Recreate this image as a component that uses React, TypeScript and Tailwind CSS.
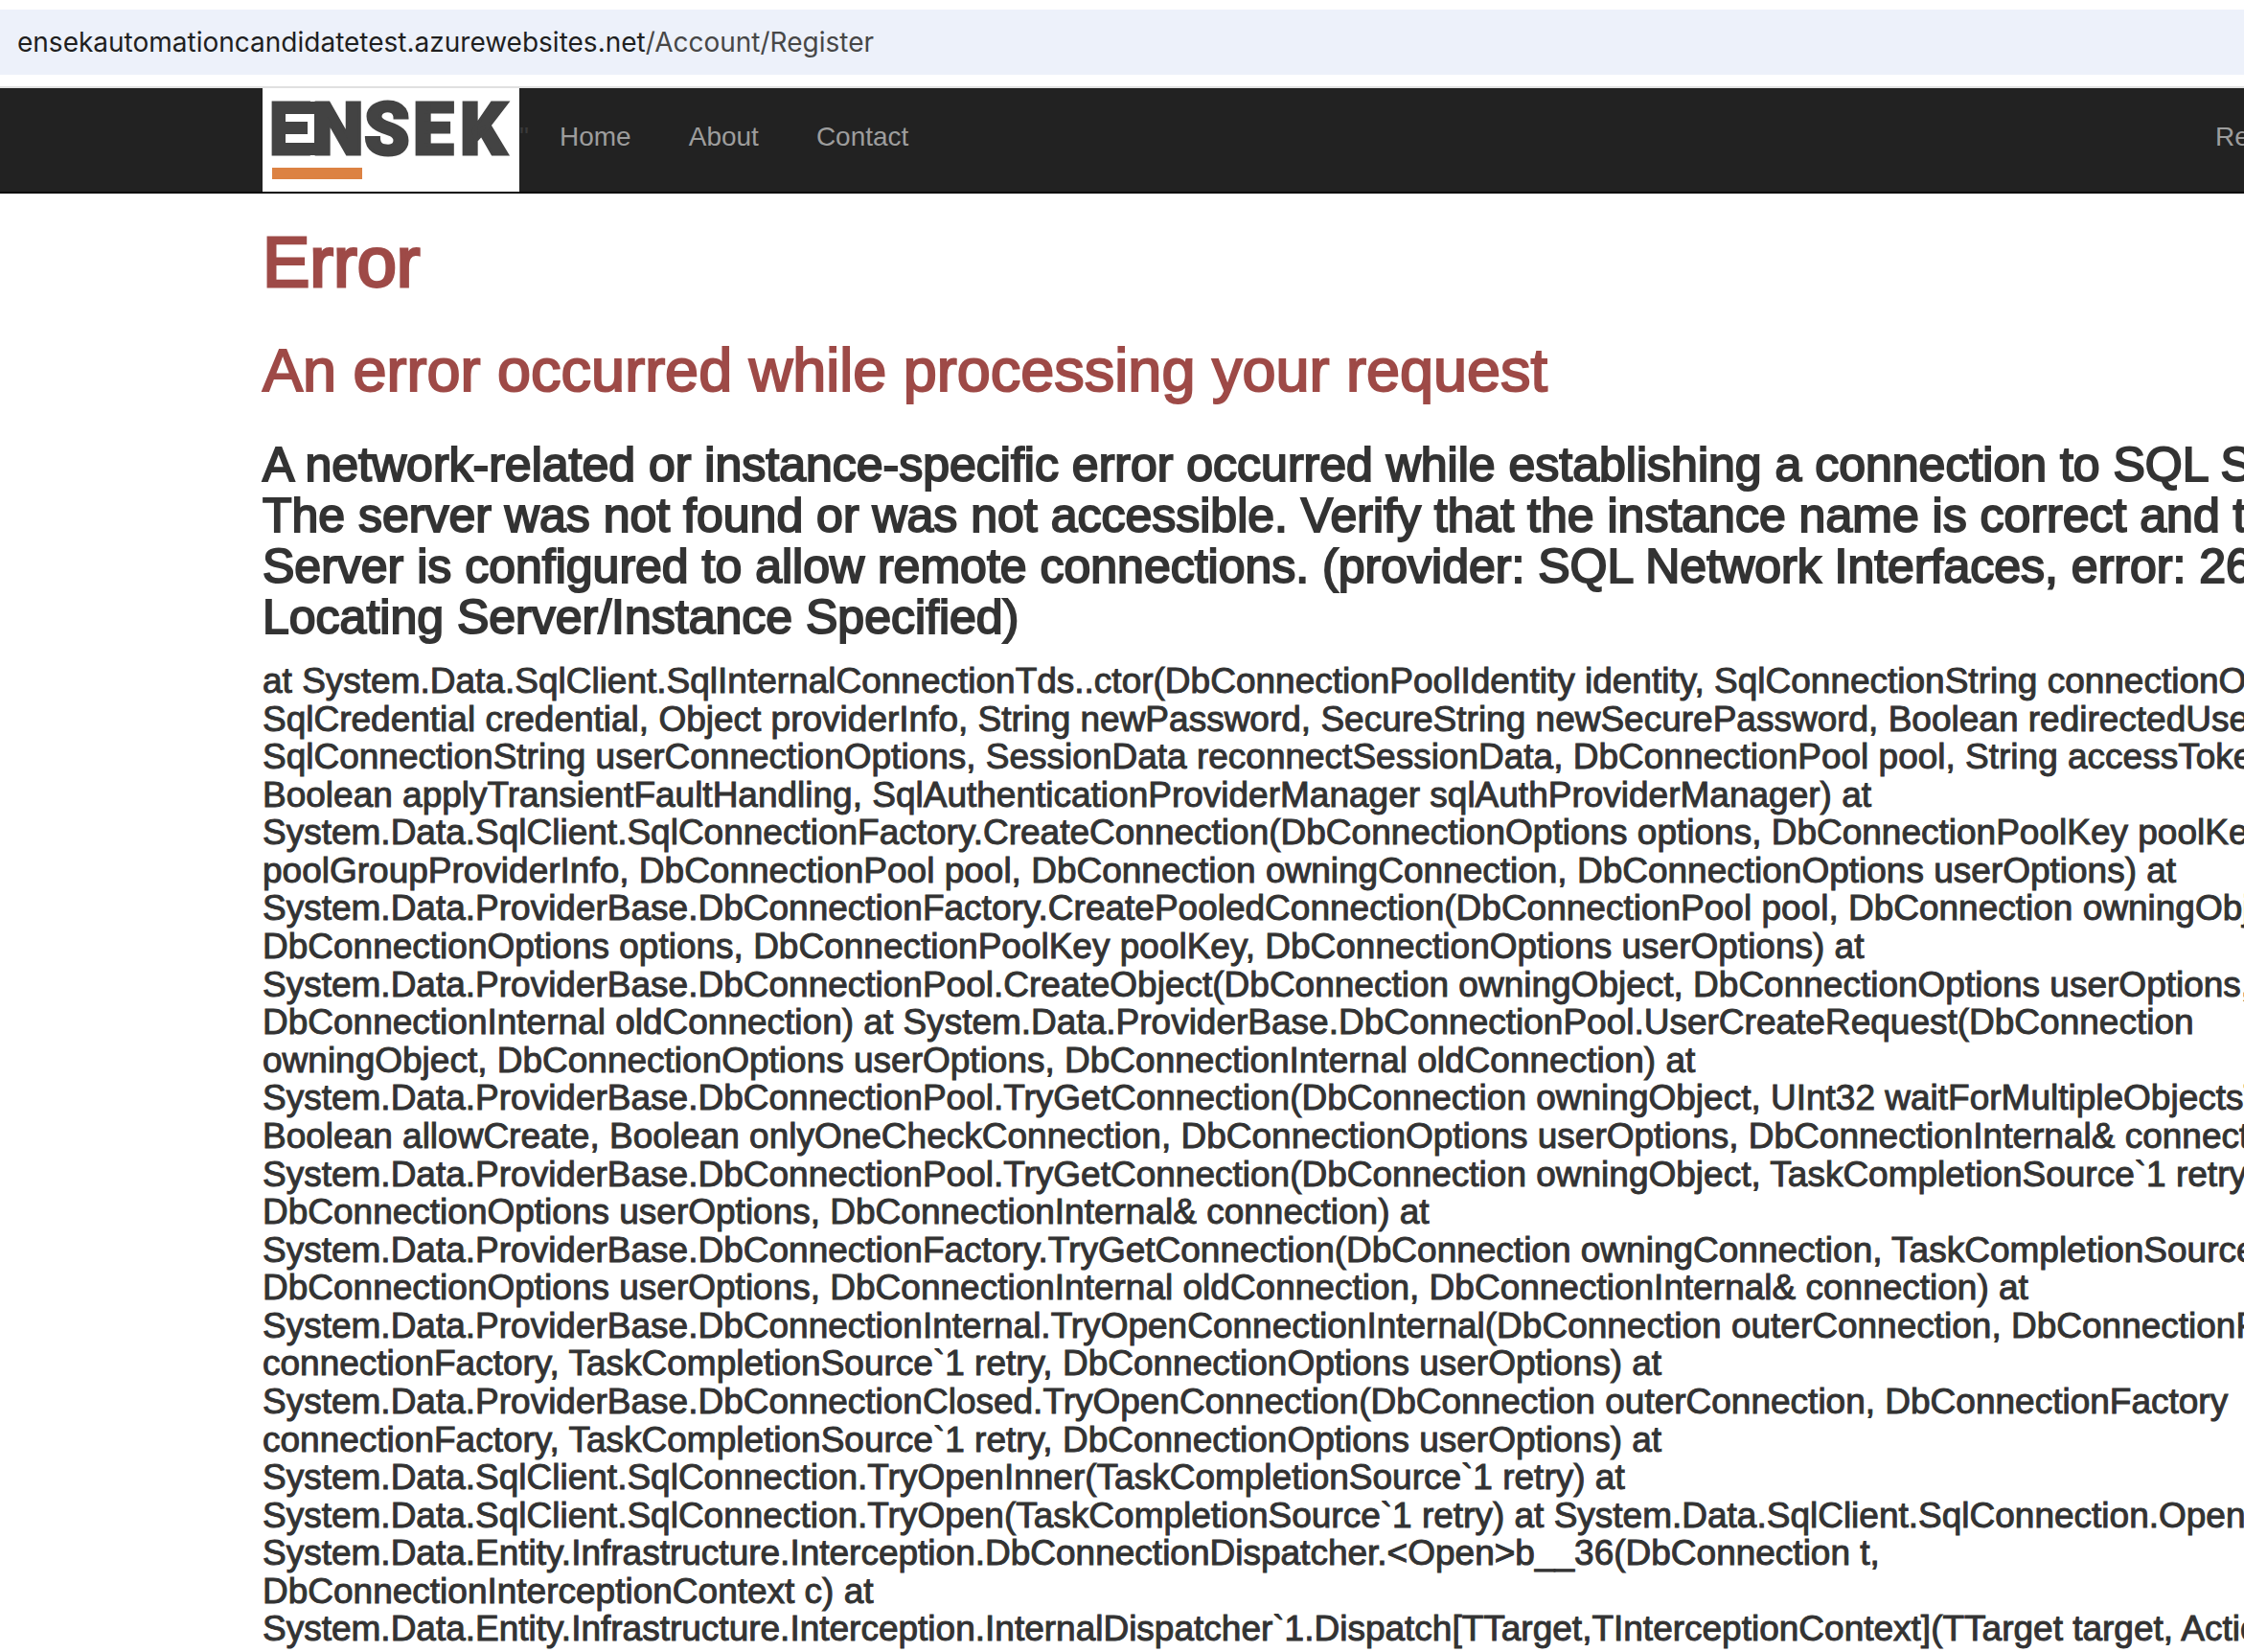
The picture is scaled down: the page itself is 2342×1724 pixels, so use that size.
const messageLines = [
  "A network-related or instance-specific error occurred while establishing a connection to SQL Server.",
  "The server was not found or was not accessible. Verify that the instance name is correct and that SQL",
  "Server is configured to allow remote connections. (provider: SQL Network Interfaces, error: 26 - Error",
  "Locating Server/Instance Specified)",
];

const traceLines = [
  "at System.Data.SqlClient.SqlInternalConnectionTds..ctor(DbConnectionPoolIdentity identity, SqlConnectionString connectionOptions,",
  "SqlCredential credential, Object providerInfo, String newPassword, SecureString newSecurePassword, Boolean redirectedUserInstance,",
  "SqlConnectionString userConnectionOptions, SessionData reconnectSessionData, DbConnectionPool pool, String accessToken,",
  "Boolean applyTransientFaultHandling, SqlAuthenticationProviderManager sqlAuthProviderManager) at",
  "System.Data.SqlClient.SqlConnectionFactory.CreateConnection(DbConnectionOptions options, DbConnectionPoolKey poolKey, Object",
  "poolGroupProviderInfo, DbConnectionPool pool, DbConnection owningConnection, DbConnectionOptions userOptions) at",
  "System.Data.ProviderBase.DbConnectionFactory.CreatePooledConnection(DbConnectionPool pool, DbConnection owningObject,",
  "DbConnectionOptions options, DbConnectionPoolKey poolKey, DbConnectionOptions userOptions) at",
  "System.Data.ProviderBase.DbConnectionPool.CreateObject(DbConnection owningObject, DbConnectionOptions userOptions,",
  "DbConnectionInternal oldConnection) at System.Data.ProviderBase.DbConnectionPool.UserCreateRequest(DbConnection",
  "owningObject, DbConnectionOptions userOptions, DbConnectionInternal oldConnection) at",
  "System.Data.ProviderBase.DbConnectionPool.TryGetConnection(DbConnection owningObject, UInt32 waitForMultipleObjectsTimeout,",
  "Boolean allowCreate, Boolean onlyOneCheckConnection, DbConnectionOptions userOptions, DbConnectionInternal& connection) at",
  "System.Data.ProviderBase.DbConnectionPool.TryGetConnection(DbConnection owningObject, TaskCompletionSource`1 retry,",
  "DbConnectionOptions userOptions, DbConnectionInternal& connection) at",
  "System.Data.ProviderBase.DbConnectionFactory.TryGetConnection(DbConnection owningConnection, TaskCompletionSource`1 retry,",
  "DbConnectionOptions userOptions, DbConnectionInternal oldConnection, DbConnectionInternal& connection) at",
  "System.Data.ProviderBase.DbConnectionInternal.TryOpenConnectionInternal(DbConnection outerConnection, DbConnectionFactory",
  "connectionFactory, TaskCompletionSource`1 retry, DbConnectionOptions userOptions) at",
  "System.Data.ProviderBase.DbConnectionClosed.TryOpenConnection(DbConnection outerConnection, DbConnectionFactory",
  "connectionFactory, TaskCompletionSource`1 retry, DbConnectionOptions userOptions) at",
  "System.Data.SqlClient.SqlConnection.TryOpenInner(TaskCompletionSource`1 retry) at",
  "System.Data.SqlClient.SqlConnection.TryOpen(TaskCompletionSource`1 retry) at System.Data.SqlClient.SqlConnection.Open() at",
  "System.Data.Entity.Infrastructure.Interception.DbConnectionDispatcher.<Open>b__36(DbConnection t,",
  "DbConnectionInterceptionContext c) at",
  "System.Data.Entity.Infrastructure.Interception.InternalDispatcher`1.Dispatch[TTarget,TInterceptionContext](TTarget target, Action`2",
];

const links = ["Home", "About", "Contact"];

function Logo() {
  return (
    <svg width="268" height="108" viewBox="0 0 268 108" role="img" aria-label="ENSEK" className="block shrink-0 bg-white">
      <g fill="#434343" stroke="#434343" strokeWidth="3" fontFamily="Roboto" fontWeight="900" fontSize="76">
        <text x="7" y="69">E</text>
        <text x="52" y="69">N</text>
        <text x="106" y="69">S</text>
        <text x="157" y="69">E</text>
        <text x="206" y="69">K</text>
      </g>
      {/* frame that joins the first two letters */}
      <rect x="10" y="14" width="48" height="56" fill="#434343" />
      <path d="M24 27H54V57H24V48H47V35H24Z" fill="#ffffff" />
      <rect x="10" y="83" width="94" height="12" fill="#dc8243" />
    </svg>
  );
}

export default function App() {
  return (
    <div className="min-h-screen overflow-hidden bg-white font-['Liberation_Sans',Arial,sans-serif] text-[#333333]">
      <header>
        <div className="border-b-2 border-[#e0e0e0] pt-2.5 pb-3">
          <div className="flex h-17 items-center bg-[#edf1fa] pl-[18px] font-[Inter,sans-serif] text-[28px] leading-10 whitespace-nowrap text-[#1f1f1f]">
            <span>ensekautomationcandidatetest.azurewebsites.net</span>
            <span className="text-[#474747]">/Account/Register</span>
          </div>
        </div>
        <nav className="flex items-start justify-between border-b-2 border-[#080808] bg-[#222222] pl-[274px] text-[28px] leading-10 text-[#9d9d9d]">
          <div className="flex items-start">
            <a href="#home" className="flex">
              <Logo />
              <span className="w-3 pt-[31px] text-[#3a3a3a]">"</span>
            </a>
            <ul className="flex pt-[31px]">
              {links.map((l) => (
                <li key={l}>
                  <a href={"#" + l.toLowerCase()} className="px-[30px]">{l}</a>
                </li>
              ))}
            </ul>
          </div>
          <a href="#register" className="mt-[31px] w-[30px] overflow-hidden whitespace-nowrap">Register</a>
        </nav>
      </header>
      <main className="pt-8 pl-[274px] font-normal whitespace-nowrap">
        <h1 className="text-[74px] leading-[79px] text-[#9e4a47] [-webkit-text-stroke:3px_#9e4a47]">Error</h1>
        <h2 className="mt-10 text-[63px] leading-[66px] text-[#9e4a47] [-webkit-text-stroke:2px_#9e4a47]">
          An error occurred while processing your request
        </h2>
        <h3 className="mt-10 text-[50px] leading-[53px] [-webkit-text-stroke:2px_#333333]">
          {messageLines.map((l) => (
            <span key={l} className="block">{l}</span>
          ))}
        </h3>
        <h4 className="mt-5 text-[37px] leading-[1.07] [-webkit-text-stroke:1px_#333333]">
          {traceLines.map((l, i) => (
            <span key={i} className="block">{l}</span>
          ))}
        </h4>
      </main>
    </div>
  );
}
